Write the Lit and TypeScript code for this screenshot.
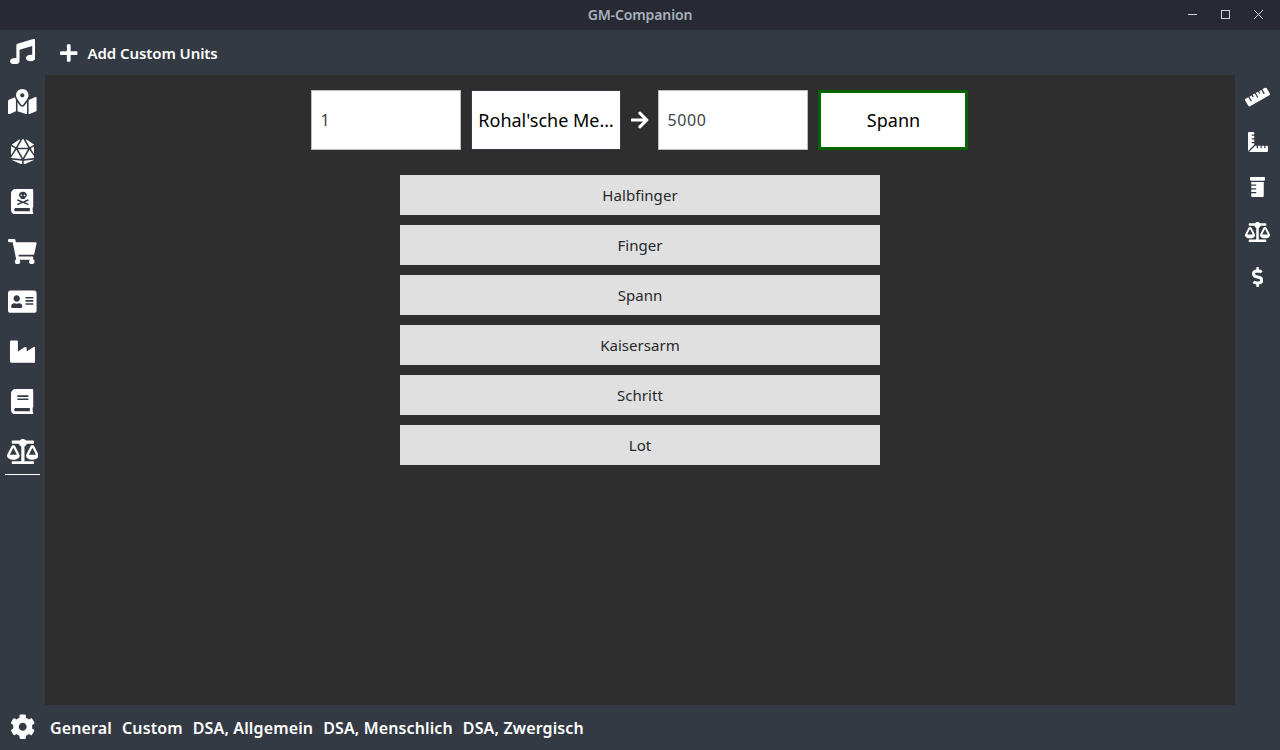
import { LitElement, html, css, svg } from "lit";
import { customElement, property } from "lit/decorators.js";

interface Glyph {
  w: number;
  d: string;
}

const ICONS: Record<string, Glyph> = {
  music: { w: 512, d: "M470.38 1.51L150.41 96A32 32 0 0 0 128 126.51v261.41A139 139 0 0 0 96 384c-53 0-96 28.66-96 64s43 64 96 64 96-28.66 96-64V214.32l256-75v184.61a138.4 138.4 0 0 0-32-3.93c-53 0-96 28.66-96 64s43 64 96 64 96-28.65 96-64V32a32 32 0 0 0-41.62-30.49z" },
  map: { w: 576, d: "M288 0c-69.59 0-126 56.41-126 126 0 56.26 82.35 158.8 113.9 196.02 6.39 7.54 17.82 7.54 24.2 0C331.65 284.8 414 182.26 414 126 414 56.41 357.59 0 288 0zm0 168c-23.2 0-42-18.8-42-42s18.8-42 42-42 42 18.8 42 42-18.8 42-42 42zM20.12 215.95A32.006 32.006 0 0 0 0 245.66v250.32c0 11.32 11.43 19.06 21.94 14.86L160 448V214.92c-8.84-15.98-16.07-31.54-21.25-46.42L20.12 215.95zM288 359.67c-14.07 0-27.38-6.18-36.51-16.96-19.66-23.2-40.57-49.62-59.49-76.72v182l192 64V266c-18.92 27.09-39.82 53.52-59.49 76.72-9.13 10.77-22.44 16.95-36.51 16.95zm266.06-198.51L416 224v288l139.88-55.95A31.996 31.996 0 0 0 576 426.34V176.02c0-11.32-11.43-19.06-21.94-14.86z" },
  dice: { w: 480, d: "M106.75 215.06L1.2 370.95c-3.08 5 .1 11.5 5.93 12.14l208.26 22.07-108.64-190.1zM7.41 315.43L82.7 193.08 6.06 147.1c-2.67-1.62-6.06.32-6.06 3.45v162.81c0 4.03 5.29 5.53 7.41 2.07zM18.25 423.6l194.4 87.66c5.3 2.45 11.35-1.43 11.35-7.26v-65.67l-203.55-22.3c-4.45-.5-6.23 5.59-2.2 7.57zm81.22-257.78L179.4 22.88c4.34-7.06-3.59-15.25-10.78-11.14L17.81 110.35c-2.47 1.62-2.39 5.26.13 6.78l81.53 48.69zM240 176h109.21L253.63 7.62C250.5 2.54 245.25 0 240 0s-10.5 2.54-13.63 7.62L130.79 176H240zm233.94-28.9l-76.64 45.99 75.29 122.35c2.11 3.46 7.41 1.96 7.41-2.07V150.55c0-3.13-3.39-5.07-6.06-3.45zm-93.41 18.72l81.53-48.7c2.53-1.52 2.6-5.16.13-6.78l-150.81-98.6c-7.19-4.11-15.12 4.08-10.78 11.14l79.93 142.94zm79.02 250.21L256 438.32v65.67c0 5.84 6.05 9.71 11.35 7.26l194.4-87.66c4.03-1.97 2.25-8.06-2.2-7.56zm-86.3-200.97l-108.63 190.1 208.26-22.07c5.83-.65 9.01-7.14 5.93-12.14L373.25 215.06zM240 208H139.57L240 383.75 340.43 208H240z" },
  skullbook: { w: 448, d: "M448 360V24c0-13.3-10.7-24-24-24H96C43 0 0 43 0 96v320c0 53 43 96 96 96h328c13.3 0 24-10.7 24-24v-16c0-7.5-3.5-14.3-8.9-18.7-4.2-15.4-4.2-59.3 0-74.7 5.4-4.3 8.9-11.1 8.9-18.6zM240 56c44.2 0 80 28.7 80 64 0 20.9-12.7 39.2-32 50.9V184c0 8.8-7.2 16-16 16h-64c-8.8 0-16-7.2-16-16v-13.1c-19.3-11.7-32-30-32-50.9 0-35.3 35.8-64 80-64zM208 112a16 16 0 1 0 0 32 16 16 0 1 0 0-32zM272 112a16 16 0 1 0 0 32 16 16 0 1 0 0-32zM124 226l6-14c2-4 6-6 10-4l100 43 100-43c4-2 8 0 10 4l6 14c2 4 0 8-4 10l-71 30 71 30c4 2 6 6 4 10l-6 14c-2 4-6 6-10 4l-100-43-100 43c-4 2-8 0-10-4l-6-14c-2-4 0-8 4-10l71-30-71-30c-4-2-6-6-4-10zM381.4 448H96c-17.7 0-32-14.3-32-32 0-17.6 14.4-32 32-32h285.4c-1.9 17.1-1.9 46.9 0 64z" },
  cart: { w: 576, d: "M528.12 301.319l47.273-208C578.806 78.301 567.391 64 551.99 64H159.208l-9.166-44.81C147.758 8.021 137.93 0 126.529 0H24C10.745 0 0 10.745 0 24v16c0 13.255 10.745 24 24 24h69.883l70.248 343.435C147.325 417.1 136 435.222 136 456c0 30.928 25.072 56 56 56s56-25.072 56-56c0-15.674-6.447-29.835-16.824-40h209.647C430.447 426.165 424 440.326 424 456c0 30.928 25.072 56 56 56s56-25.072 56-56c0-22.172-12.888-41.332-31.579-50.405l5.517-24.276c3.413-15.018-8.002-29.319-23.403-29.319H218.117l-6.545-32h293.145c11.206 0 20.92-7.754 23.403-18.681z" },
  card: { w: 576, d: "M528 32H48C21.5 32 0 53.5 0 80v352c0 26.5 21.5 48 48 48h480c26.5 0 48-21.5 48-48V80c0-26.5-21.5-48-48-48zm-352 96c35.3 0 64 28.7 64 64s-28.7 64-64 64-64-28.7-64-64 28.7-64 64-64zm112 236.8c0 10.6-10 19.2-22.4 19.2H86.4C74 384 64 375.4 64 364.8v-19.2c0-31.8 30.1-57.6 67.2-57.6h5c12.3 5.1 25.7 8 39.8 8s27.6-2.9 39.8-8h5c37.1 0 67.2 25.8 67.2 57.6v19.2zM512 312c0 4.4-3.6 8-8 8H360c-4.4 0-8-3.6-8-8v-16c0-4.4 3.6-8 8-8h144c4.4 0 8 3.6 8 8v16zm0-64c0 4.4-3.6 8-8 8H360c-4.4 0-8-3.6-8-8v-16c0-4.4 3.6-8 8-8h144c4.4 0 8 3.6 8 8v16zm0-64c0 4.4-3.6 8-8 8H360c-4.4 0-8-3.6-8-8v-16c0-4.4 3.6-8 8-8h144c4.4 0 8 3.6 8 8v16z" },
  industry: { w: 512, d: "M475.115 163.781L336 252.309v-68.28c0-18.916-20.931-30.399-36.885-20.248L160 252.309V56c0-13.255-10.745-24-24-24H24C10.745 32 0 42.745 0 56v400c0 13.255 10.745 24 24 24h464c13.255 0 24-10.745 24-24V184.029c0-18.917-20.931-30.399-36.885-20.248z" },
  book: { w: 448, d: "M448 360V24c0-13.3-10.7-24-24-24H96C43 0 0 43 0 96v320c0 53 43 96 96 96h328c13.3 0 24-10.7 24-24v-16c0-7.5-3.5-14.3-8.9-18.7-4.2-15.4-4.2-59.3 0-74.7 5.4-4.3 8.9-11.1 8.9-18.6zM128 134c0-3.3 2.7-6 6-6h212c3.3 0 6 2.7 6 6v20c0 3.3-2.7 6-6 6H134c-3.3 0-6-2.7-6-6v-20zm0 64c0-3.3 2.7-6 6-6h212c3.3 0 6 2.7 6 6v20c0 3.3-2.7 6-6 6H134c-3.3 0-6-2.7-6-6v-20zm253.4 250H96c-17.7 0-32-14.3-32-32 0-17.6 14.4-32 32-32h285.4c-1.9 17.1-1.9 46.9 0 64z" },
  scale: { w: 640, d: "M256 336h-.02c0-16.18 1.34-8.73-85.05-181.51-17.65-35.29-68.19-35.36-85.87 0C-2.06 328.75.02 320.33.02 336H0c0 44.18 57.31 80 128 80s128-35.82 128-80zM128 176l72 144H56l72-144zm511.98 160c0-16.18 1.34-8.73-85.05-181.51-17.65-35.29-68.19-35.36-85.87 0-87.12 174.26-85.04 165.84-85.04 181.51H384c0 44.18 57.31 80 128 80s128-35.82 128-80h-.02zM440 320l72-144 72 144H440zm88 128H352V153.25c23.51-10.29 41.16-31.48 46.39-57.25H528c8.84 0 16-7.16 16-16V48c0-8.84-7.16-16-16-16H383.64C369.04 12.68 346.09 0 320 0s-49.04 12.68-63.64 32H112c-8.84 0-16 7.16-16 16v32c0 8.84 7.16 16 16 16h129.61c5.23 25.76 22.87 46.96 46.39 57.25V448H112c-8.84 0-16 7.16-16 16v32c0 8.84 7.16 16 16 16h416c8.84 0 16-7.16 16-16v-32c0-8.84-7.16-16-16-16z" },
  cog: { w: 512, d: "M487.4 315.7l-42.6-24.6c4.3-23.2 4.3-47 0-70.2l42.6-24.6c4.9-2.8 7.1-8.6 5.5-14-11.1-35.6-30-67.8-54.7-94.6-3.8-4.1-10-5.1-14.8-2.3L380.8 110c-17.9-15.4-38.5-27.3-60.8-35.1V25.8c0-5.6-3.9-10.5-9.4-11.7-36.7-8.2-74.3-7.8-109.2 0-5.5 1.2-9.4 6.1-9.4 11.7V75c-22.2 7.9-42.8 19.8-60.8 35.1L88.7 85.5c-4.9-2.8-11-1.9-14.8 2.3-24.7 26.7-43.6 58.9-54.7 94.6-1.7 5.4.6 11.2 5.5 14L67.3 221c-4.3 23.2-4.3 47 0 70.2l-42.6 24.6c-4.9 2.8-7.1 8.6-5.5 14 11.1 35.6 30 67.8 54.7 94.6 3.8 4.1 10 5.1 14.8 2.3l42.6-24.6c17.9 15.4 38.5 27.3 60.8 35.1v49.2c0 5.6 3.9 10.5 9.4 11.7 36.7 8.2 74.3 7.8 109.2 0 5.5-1.2 9.4-6.1 9.4-11.7v-49.2c22.2-7.9 42.8-19.8 60.8-35.1l42.6 24.6c4.9 2.8 11 1.9 14.8-2.3 24.7-26.7 43.6-58.9 54.7-94.6 1.5-5.5-.7-11.3-5.6-14.1zM256 336c-44.1 0-80-35.9-80-80s35.9-80 80-80 80 35.9 80 80-35.9 80-80 80z" },
  plus: { w: 448, d: "M416 208H272V64c0-17.67-14.33-32-32-32h-32c-17.67 0-32 14.33-32 32v144H32c-17.67 0-32 14.33-32 32v32c0 17.67 14.33 32 32 32h144v144c0 17.67 14.33 32 32 32h32c17.67 0 32-14.33 32-32V304h144c17.67 0 32-14.33 32-32v-32c0-17.67-14.33-32-32-32z" },
  arrow: { w: 448, d: "M190.5 66.9l22.2-22.2c9.4-9.4 24.6-9.4 33.9 0L441 239c9.4 9.4 9.4 24.6 0 33.9L246.6 467.3c-9.4 9.4-24.6 9.4-33.9 0l-22.2-22.2c-9.5-9.5-9.3-25 .4-34.3L311.4 296H24c-13.3 0-24-10.7-24-24v-32c0-13.3 10.7-24 24-24h287.4L190.9 101.2c-9.8-9.3-10-24.8-.4-34.3z" },
  dollar: { w: 288, d: "M209.2 233.4l-108-31.6C88.7 198.2 80 186.5 80 173.5c0-16.3 13.2-29.5 29.5-29.5h66.3c12.2 0 24.2 3.7 34.2 10.5 6.1 4.1 14.3 3.1 19.5-2l34.8-34c7.1-6.9 6.1-18.4-1.8-24.5C238 74.8 207.4 64.1 176 64V16c0-8.8-7.2-16-16-16h-32c-8.8 0-16 7.2-16 16v48h-2.5C45.8 64-5.4 118.7.5 183.6c4.2 46.1 39.4 83.6 83.8 96.6l102.5 30c12.5 3.7 21.2 15.3 21.2 28.3 0 16.3-13.2 29.5-29.5 29.5h-66.3C100 368 88 364.3 78 357.5c-6.1-4.1-14.3-3.1-19.5 2l-34.8 34c-7.1 6.9-6.1 18.4 1.8 24.5 24.5 19.2 55.1 29.9 86.5 30v48c0 8.8 7.2 16 16 16h32c8.8 0 16-7.2 16-16v-48.2c46.6-.9 90.3-28.6 105.7-72.7 21.5-61.6-14.6-124.8-72.5-141.7z" },
  ruler: { w: 640, d: "M635.7 167.2L556.1 31.7c-8.8-15-28.3-20.1-43.5-11.5l-69 39.1L503.3 161c2.2 3.8.9 8.5-2.9 10.7l-13.8 7.8c-3.8 2.2-8.7.9-10.9-2.9L416 75l-55.2 31.3 27.9 47.4c2.2 3.8.9 8.5-2.9 10.7l-13.8 7.8c-3.8 2.2-8.7.9-10.9-2.9L333.2 122 278 153.3 337.8 255c2.2 3.7.9 8.5-2.9 10.7l-13.8 7.8c-3.8 2.2-8.7.9-10.9-2.9l-59.7-101.7-55.2 31.3 27.9 47.4c2.2 3.8.9 8.5-2.9 10.7l-13.8 7.8c-3.8 2.2-8.7.9-10.9-2.9l-27.9-47.5-55.2 31.3 59.7 101.7c2.2 3.7.9 8.5-2.9 10.7l-13.8 7.8c-3.8 2.2-8.7.9-10.9-2.9L84.9 262.9l-69 39.1C.7 310.7-4.6 329.8 4.2 344.8l79.6 135.6c8.8 15 28.3 20.1 43.5 11.5L624.1 210c15.2-8.6 20.4-27.8 11.6-42.8z" },
  combined: { w: 512, d: "M160 288h-56c-4.42 0-8-3.58-8-8v-16c0-4.42 3.58-8 8-8h56v-64h-56c-4.42 0-8-3.58-8-8v-16c0-4.42 3.58-8 8-8h56V96h-56c-4.42 0-8-3.58-8-8V72c0-4.42 3.58-8 8-8h56V32c0-17.67-14.33-32-32-32H32C14.33 0 0 14.33 0 32v448c0 2.77.91 5.24 1.57 7.8L160 329.38V288zm320 64h-32v56c0 4.42-3.58 8-8 8h-16c-4.42 0-8-3.58-8-8v-56h-64v56c0 4.42-3.58 8-8 8h-16c-4.42 0-8-3.58-8-8v-56h-64v56c0 4.42-3.58 8-8 8h-16c-4.42 0-8-3.58-8-8v-56h-41.37L24.2 510.43c2.56.66 5.04 1.57 7.8 1.57h448c17.67 0 32-14.33 32-32v-96c0-17.67-14.33-32-32-32z" },
  bottle: { w: 384, d: "M32 192h120c4.4 0 8 3.6 8 8v16c0 4.4-3.6 8-8 8H32v64h120c4.4 0 8 3.6 8 8v16c0 4.4-3.6 8-8 8H32v64h120c4.4 0 8 3.6 8 8v16c0 4.4-3.6 8-8 8H32v64c0 17.6 14.4 32 32 32h256c17.6 0 32-14.4 32-32V128H32v64zM360 0H24C10.8 0 0 10.8 0 24v48c0 13.2 10.8 24 24 24h336c13.2 0 24-10.8 24-24V24c0-13.2-10.8-24-24-24z" },
};

@customElement("gm-icon")
export class GmIcon extends LitElement {
  @property() name = "";
  @property({ type: Number }) size = 20;

  static styles = css`
    :host { display: block; flex: none; line-height: 0; }
    svg { display: block; fill: #fff; }
  `;

  render() {
    const g = ICONS[this.name];
    return html`<svg
      width=${(g.w / 512) * this.size}
      height=${this.size}
      viewBox="0 0 ${g.w} 512"
    >${svg`<path fill-rule="evenodd" d=${g.d}></path>`}</svg>`;
  }
}

@customElement("app-root")
export class AppRoot extends LitElement {
  private tools = ["music", "map", "dice", "skullbook", "cart", "card", "industry", "book", "scale"];
  private categories = ["ruler", "combined", "bottle", "scale", "dollar"];
  private units = ["Halbfinger", "Finger", "Spann", "Kaisersarm", "Schritt", "Lot"];
  private groups = ["General", "Custom", "DSA, Allgemein", "DSA, Menschlich", "DSA, Zwergisch"];

  static styles = css`
    :host {
      display: grid;
      grid-template-rows: 30px 45px 630px 45px;
      grid-template-columns: 45px 1190px 45px;
      width: 1280px;
      height: 750px;
      overflow: hidden;
      background: #343a44;
      font-family: "Noto Sans", "Open Sans", sans-serif;
      font-size: 15px;
      color: #fff;
    }
    * { box-sizing: border-box; }
    .titlebar {
      grid-column: 1 / 4;
      display: grid;
      grid-template-columns: 1fr auto 1fr;
      align-items: center;
      padding-bottom: 2px;
      background: #282a33;
      color: #a9b1bd;
      font-size: 14px;
      font-weight: 600;
    }
    .title { grid-column: 2; letter-spacing: -0.12px; }
    .controls { display: flex; justify-content: flex-end; gap: 19px; padding-right: 14px; }
    .controls svg { display: block; fill: none; stroke: #d3d5d9; }
    .tools {
      grid-row: 2 / 4;
      display: flex;
      flex-direction: column;
      gap: 5px;
      padding: 0 5px;
    }
    .slot {
      display: flex;
      align-items: center;
      justify-content: center;
      height: 45px;
      flex: none;
      padding-bottom: 1px;
    }
    .tools .slot { padding-bottom: 2px; }
    .tools .slot.active { border-bottom: 1px solid #fff; padding-bottom: 1px; }
    .settings { padding-bottom: 2px; }
    .toolbar {
      grid-column: 2 / 4;
      display: flex;
      align-items: center;
      gap: 10px;
      padding-left: 15px;
      font-weight: 600;
    }
    .toolbar span { letter-spacing: -0.08px; }
    .content {
      display: flex;
      flex-direction: column;
      align-items: center;
      gap: 25px;
      padding-top: 15px;
      background: #2e2e2e;
    }
    .converter { display: flex; align-items: center; gap: 10px; margin-right: 1px; }
    .converter gm-icon { width: 17px; margin-top: -1px; }
    .field, .unit {
      width: 150px;
      height: 60px;
      display: flex;
      align-items: center;
      background: #fff;
    }
    .field { border: 1px solid #bdbdbd; padding: 0 8.5px; color: #414548; font-size: 16px; letter-spacing: 0.6px; }
    .unit { border: 1px solid #343a44; justify-content: center; color: #000; font-size: 18px; }
    .unit.target { border: 3px solid #006400; padding-left: 1px; }
    .list { display: flex; flex-direction: column; gap: 10px; width: 480px; }
    .row {
      height: 40px;
      display: flex;
      align-items: center;
      justify-content: center;
      background: #e0e0e0;
      color: #26282a;
      letter-spacing: 0.05px;
    }
    .groups {
      grid-column: 2 / 4;
      display: flex;
      align-items: center;
      gap: 10px;
      padding-left: 5px;
      font-size: 16px;
      font-weight: 600;
      letter-spacing: 0.13px;
    }
  `;

  render() {
    return html`
      <header class="titlebar">
        <div class="title">GM-Companion</div>
        <div class="controls">
          <svg width="14" height="14"><path d="M2 7.5h9" /></svg>
          <svg width="14" height="14"><rect x="2.5" y="3.5" width="8" height="8" /></svg>
          <svg width="14" height="14"><path d="M2 3l9 9M11 3l-9 9" /></svg>
        </div>
      </header>
      <nav class="tools">
        ${this.tools.map(
          (name) => html`<div class="slot ${name === "scale" ? "active" : ""}">
            <gm-icon name=${name} size="25.4"></gm-icon>
          </div>`
        )}
      </nav>
      <div class="toolbar"><gm-icon name="plus" size="20"></gm-icon><span>Add Custom Units</span></div>
      <main class="content">
        <div class="converter">
          <div class="field">1</div>
          <div class="unit"><span class="from">Rohal'sche Me…</span></div>
          <gm-icon name="arrow" size="20"></gm-icon>
          <div class="field">5000</div>
          <div class="unit target"><span>Spann</span></div>
        </div>
        <div class="list">${this.units.map((u) => html`<div class="row"><span>${u}</span></div>`)}</div>
      </main>
      <aside class="categories">
        ${this.categories.map(
          (name) => html`<div class="slot"><gm-icon name=${name} size="20"></gm-icon></div>`
        )}
      </aside>
      <div class="slot settings"><gm-icon name="cog" size="25.4"></gm-icon></div>
      <footer class="groups">${this.groups.map((g) => html`<span>${g}</span>`)}</footer>
    `;
  }
}
